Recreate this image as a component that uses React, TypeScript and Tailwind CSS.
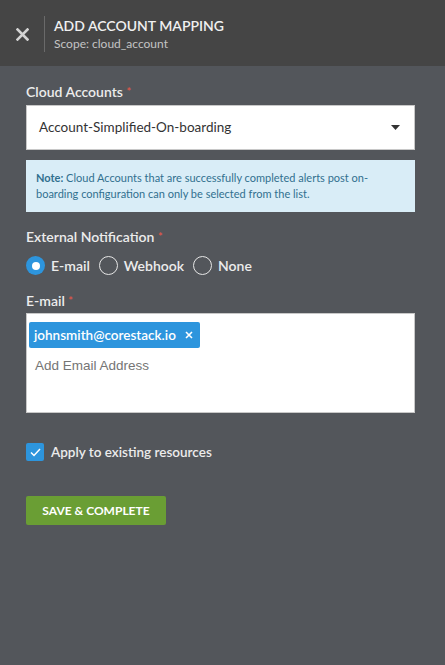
import React from "react"

const font = { fontFamily: "Lato, 'Open Sans', sans-serif" }

function Label({ children }: { children: React.ReactNode }) {
  return (
    <div className="text-[14px] font-semibold text-[#ececec] leading-[18px]">
      {children} <span className="text-[#e0564a] text-[11px] align-top">*</span>
    </div>
  )
}

function Radio({ label, checked }: { label: string; checked?: boolean }) {
  return (
    <label className="flex items-center gap-[6px]">
      {checked ? (
        <span className="w-[19px] h-[19px] rounded-full bg-[#2d95dd] flex items-center justify-center">
          <span className="w-[8px] h-[8px] rounded-full bg-white" />
        </span>
      ) : (
        <span className="w-[19px] h-[19px] rounded-full border border-[#e6e6e6]" />
      )}
      <span className="text-[14px] font-semibold text-[#ececec]">{label}</span>
    </label>
  )
}

export default function App() {
  return (
    <div className="w-[445px] h-[665px] bg-[#53565b] flex flex-col" style={font}>
      {/* Header */}
      <div className="h-[66px] bg-[#454545] flex items-center shrink-0 pt-[2px]">
        <div className="w-[44px] flex justify-center">
          <svg width="13" height="13" viewBox="0 0 13 13">
            <path d="M1.5 1.5 L11.5 11.5 M11.5 1.5 L1.5 11.5" stroke="#d4d4d4" strokeWidth="2.6" strokeLinecap="square" />
          </svg>
        </div>
        <div className="h-[36px] border-l border-[#6a6a6a] pl-[9px] flex flex-col justify-center">
          <div className="text-[14px] font-semibold text-[#f0f0f0] leading-[18px]">ADD ACCOUNT MAPPING</div>
          <div className="text-[12px] text-[#c4c4c4] leading-[16px] mt-[1px]">Scope: cloud_account</div>
        </div>
      </div>

      {/* Body */}
      <div className="pl-[26px] pr-[30px] pt-[17px]">
        <Label>Cloud Accounts</Label>
        <div className="mt-[4px] h-[45px] bg-white border border-[#c8c8c8] flex items-center justify-between pl-[12px] pr-[14px]">
          <span className="text-[13.5px] text-[#333]">Account-Simplified-On-boarding</span>
          <svg width="9" height="5" viewBox="0 0 9 5">
            <path d="M0 0 H9 L4.5 5 Z" fill="#333" />
          </svg>
        </div>
        <div className="mt-[10px] bg-[#d9edf7] px-[10px] py-[10px] text-[11px] leading-[16px] text-[#31708f]">
          <p>
            <b>Note:</b> Cloud Accounts that are successfully completed alerts post on-boarding configuration can only be selected from the list.
          </p>
        </div>

        <div className="mt-[16px]">
          <Label>External Notification</Label>
        </div>
        <div className="mt-[9px] flex items-center gap-[9px]">
          <Radio label="E-mail" checked />
          <Radio label="Webhook" />
          <Radio label="None" />
        </div>

        <div className="mt-[16px]">
          <Label>E-mail</Label>
        </div>
        <div className="mt-[3px] h-[100px] bg-white border border-[#c8c8c8] pt-[8px] px-[2px]">
          <span className="inline-flex items-center h-[26px] bg-[#2d95dd] rounded-[2px] pl-[5px] pr-[7px] gap-[9px]">
            <span className="text-[13.5px] font-semibold text-white">johnsmith@corestack.io</span>
            <svg width="8" height="8" viewBox="0 0 8 8">
              <path d="M1 1 L7 7 M7 1 L1 7" stroke="white" strokeWidth="1.6" />
            </svg>
          </span>
          <div className="mt-[8px] pl-[6px] text-[13.5px] text-[#757575]" style={{ fontFamily: "'Liberation Sans', Arial, sans-serif" }}>
            Add Email Address
          </div>
        </div>

        <div className="mt-[29px] flex items-center gap-[7px]">
          <span className="w-[18px] h-[18px] bg-[#2d95dd] rounded-[2px] flex items-center justify-center">
            <svg width="11" height="9" viewBox="0 0 11 9">
              <path d="M1 4.5 L4 7.5 L10 1" stroke="white" strokeWidth="1.5" fill="none" />
            </svg>
          </span>
          <span className="text-[13.5px] font-semibold text-[#ececec]">Apply to existing resources</span>
        </div>

        <button className="mt-[34px] h-[29px] w-[140px] bg-[#6a9e34] rounded-[2px] text-white text-[12px] font-bold">
          SAVE &amp; COMPLETE
        </button>
      </div>
    </div>
  )
}
